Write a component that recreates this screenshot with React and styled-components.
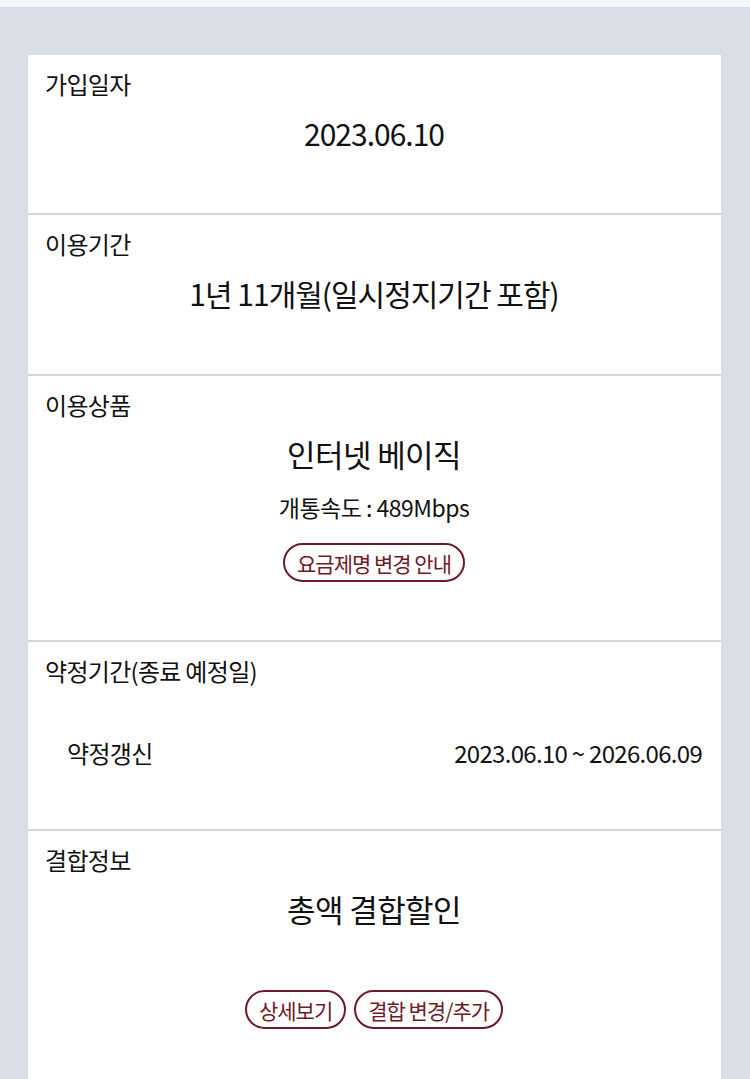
import styled, { createGlobalStyle } from "styled-components";

const GlobalStyle = createGlobalStyle`
  html, body {
    margin: 0;
    padding: 0;
    background: #d9dde6;
    font-family: "Noto Sans CJK KR", "Noto Sans", sans-serif;
    color: #111;
  }
`;

const Page = styled.div`
  min-height: 1079px;
  background: #d9dde6;
  border-top: 7px solid #f4f6f9;
  padding: 48px 29px 0 28px;
  box-sizing: border-box;
`;

const Card = styled.div`
  background: #fff;
`;

const Section = styled.section`
  padding: 14px 18px ${(p) => p.$bottom}px 17px;
  border-bottom: 2px solid #d4d7dd;
  display: flex;
  flex-direction: column;
`;

const Label = styled.div`
  font-size: 24px;
  line-height: 30px;
  letter-spacing: -0.7px;
`;

const Value = styled.div`
  margin-top: 14px;
  font-size: ${(p) => p.$size || 30}px;
  line-height: 40px;
  letter-spacing: ${(p) => (p.$size ? -0.6 : -1)}px;
  text-align: center;
`;

const Sub = styled.div`
  margin-top: 18px;
  font-size: 23px;
  line-height: 30px;
  letter-spacing: -0.5px;
  text-align: center;
`;

const Buttons = styled.div`
  margin-top: ${(p) => p.$top}px;
  display: flex;
  justify-content: center;
  gap: 8px;
`;

const Pill = styled.button`
  height: 39px;
  padding: 0 12px;
  border: 2px solid #6e1a26;
  border-radius: 20px;
  background: #fff;
  color: #6e1a26;
  font-family: inherit;
  font-size: 21px;
  letter-spacing: -1px;
  cursor: pointer;
`;

const Row = styled.div`
  margin-top: 51px;
  padding: 0 1px 0 22px;
  display: flex;
  justify-content: space-between;
  align-items: center;
  font-size: 24px;
  line-height: 32px;
  letter-spacing: -0.7px;
`;

const Dates = styled.span`
  font-size: 24px;
  letter-spacing: -0.7px;
`;

export default function App() {
  return (
    <Page>
      <GlobalStyle />
      <Card>
        <Section $bottom={60}>
          <Label>가입일자</Label>
          <Value>2023.06.10</Value>
        </Section>
        <Section $bottom={61}>
          <Label>이용기간</Label>
          <Value>1년 11개월(일시정지기간 포함)</Value>
        </Section>
        <Section $bottom={58}>
          <Label>이용상품</Label>
          <Value $size={31}>인터넷 베이직</Value>
          <Sub>개통속도 : 489Mbps</Sub>
          <Buttons $top={21}>
            <Pill>요금제명 변경 안내</Pill>
          </Buttons>
        </Section>
        <Section $bottom={60}>
          <Label>약정기간(종료 예정일)</Label>
          <Row>
            <span>약정갱신</span>
            <Dates>2023.06.10 ~ 2026.06.09</Dates>
          </Row>
        </Section>
        <Section $bottom={60}>
          <Label>결합정보</Label>
          <Value $size={31}>총액 결합할인</Value>
          <Buttons $top={61}>
            <Pill>상세보기</Pill>
            <Pill>결합 변경/추가</Pill>
          </Buttons>
        </Section>
      </Card>
    </Page>
  );
}
